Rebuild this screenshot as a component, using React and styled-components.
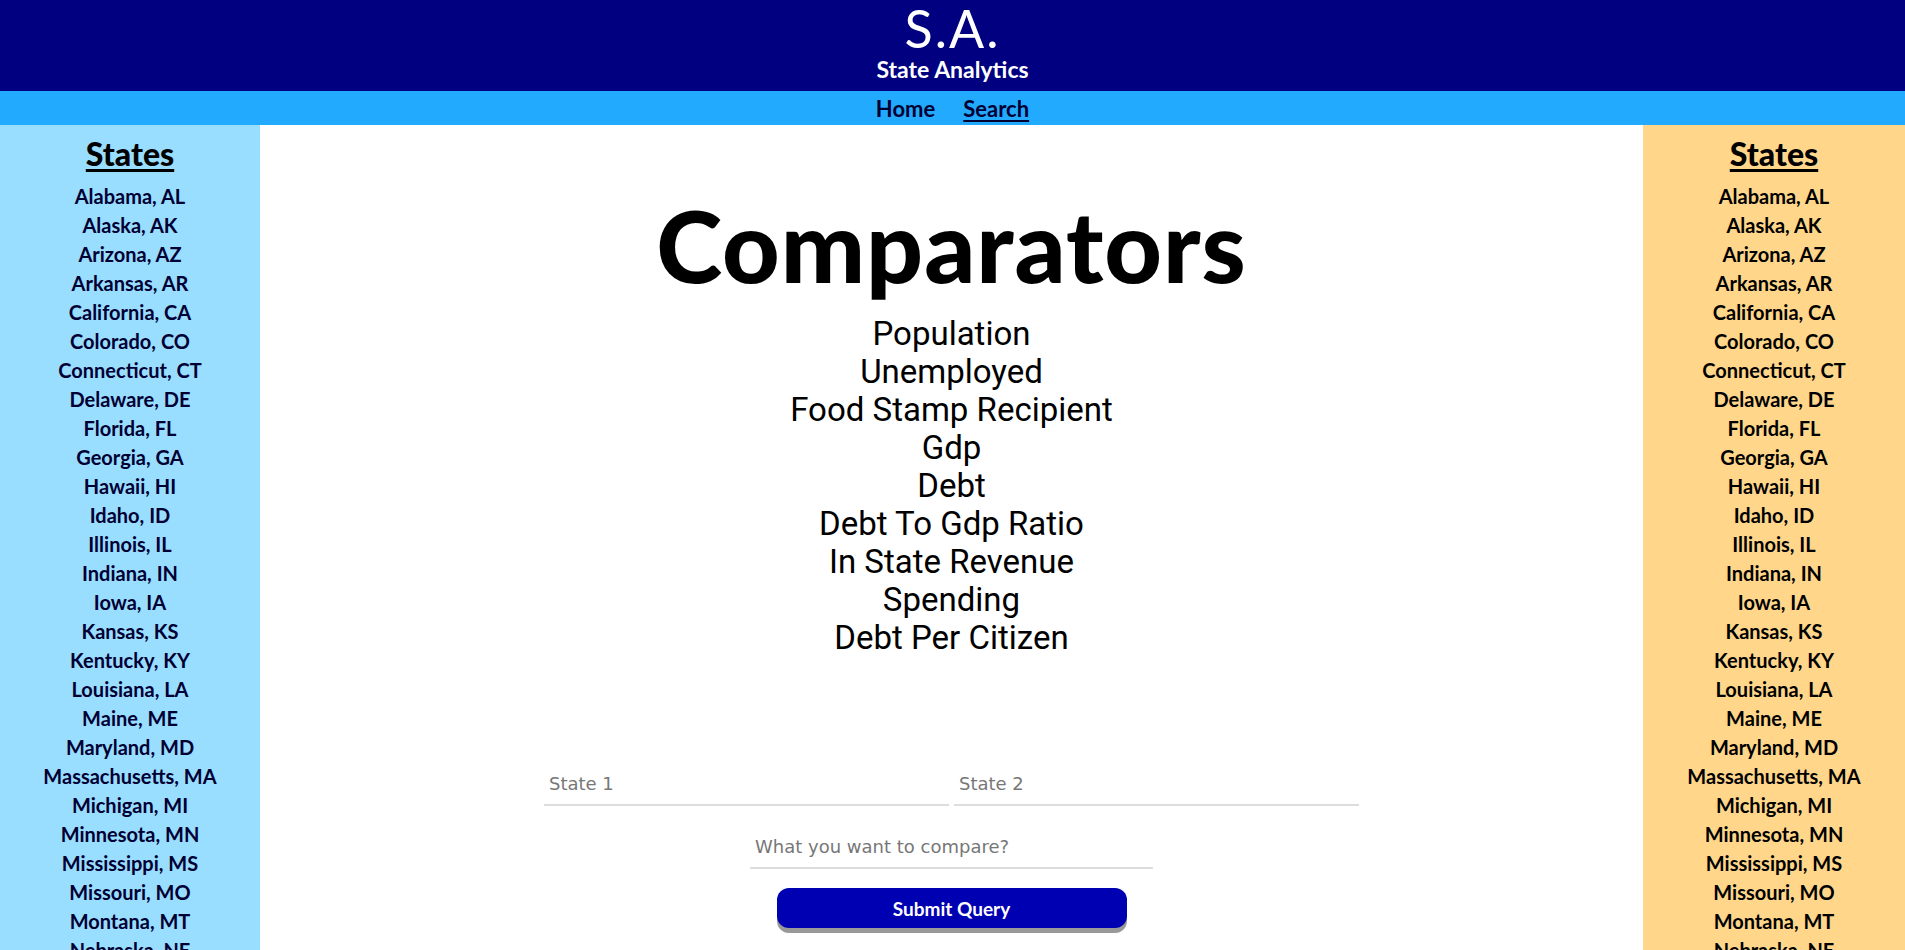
import React from "react";
import styled, { createGlobalStyle } from "styled-components";

const GlobalStyle = createGlobalStyle`
  body {
    margin: 0;
    font-family: "Lato", "Liberation Sans", sans-serif;
  }
`;

const STATES = [
  ["Alabama", "AL"], ["Alaska", "AK"], ["Arizona", "AZ"], ["Arkansas", "AR"],
  ["California", "CA"], ["Colorado", "CO"], ["Connecticut", "CT"], ["Delaware", "DE"],
  ["Florida", "FL"], ["Georgia", "GA"], ["Hawaii", "HI"], ["Idaho", "ID"],
  ["Illinois", "IL"], ["Indiana", "IN"], ["Iowa", "IA"], ["Kansas", "KS"],
  ["Kentucky", "KY"], ["Louisiana", "LA"], ["Maine", "ME"], ["Maryland", "MD"],
  ["Massachusetts", "MA"], ["Michigan", "MI"], ["Minnesota", "MN"], ["Mississippi", "MS"],
  ["Missouri", "MO"], ["Montana", "MT"], ["Nebraska", "NE"], ["Nevada", "NV"],
  ["New Hampshire", "NH"], ["New Jersey", "NJ"], ["New Mexico", "NM"], ["New York", "NY"],
  ["North Carolina", "NC"], ["North Dakota", "ND"], ["Ohio", "OH"], ["Oklahoma", "OK"],
  ["Oregon", "OR"], ["Pennsylvania", "PA"], ["Rhode Island", "RI"], ["South Carolina", "SC"],
  ["South Dakota", "SD"], ["Tennessee", "TN"], ["Texas", "TX"], ["Utah", "UT"],
  ["Vermont", "VT"], ["Virginia", "VA"], ["Washington", "WA"], ["West Virginia", "WV"],
  ["Wisconsin", "WI"], ["Wyoming", "WY"],
];

const COMPARATORS = [
  "Population",
  "Unemployed",
  "Food Stamp Recipient",
  "Gdp",
  "Debt",
  "Debt To Gdp Ratio",
  "In State Revenue",
  "Spending",
  "Debt Per Citizen",
];

const Header = styled.header`
  height: 91px;
  background: #000080;
  color: white;
  display: flex;
  flex-direction: column;
  align-items: center;
  box-sizing: border-box;
  padding-top: 1px;
`;

const Logo = styled.h1`
  margin: 0;
  font-size: 52px;
  font-weight: 400;
  line-height: 54px;
  letter-spacing: 2px;
`;

const Tagline = styled.div`
  font-size: 23px;
  font-weight: 700;
  line-height: 28px;
`;

const Nav = styled.nav`
  height: 34px;
  background: #22aaff;
  display: flex;
  justify-content: center;
  align-items: center;
  gap: 28px;
`;

const NavLink = styled.a`
  color: #000033;
  font-size: 22px;
  font-weight: 700;
  text-decoration: ${(p) => (p.$active ? "underline" : "none")};
  text-underline-offset: 3px;
  cursor: pointer;
`;

const Main = styled.div`
  display: grid;
  grid-template-columns: 260px 1fr 262px;
`;

const Sidebar = styled.aside`
  background: ${(p) => p.$bg};
  display: flex;
  flex-direction: column;
  align-items: center;
  padding-top: 9px;
`;

const SideTitle = styled.h2`
  margin: 0 0 8px;
  font-size: 32px;
  font-weight: 900;
  line-height: 40px;
  text-decoration: underline;
  text-underline-offset: 3px;
  color: #000;
`;

const StateItem = styled.div`
  font-size: 20px;
  font-weight: 700;
  line-height: 29px;
  color: ${(p) => p.$color};
`;

const Center = styled.section`
  display: flex;
  flex-direction: column;
  align-items: center;
  padding-top: 69px;
`;

const Title = styled.h1`
  margin: 0;
  font-size: 100px;
  font-weight: 900;
  line-height: 100px;
  letter-spacing: 1px;
`;

const List = styled.div`
  margin-top: 21px;
  display: flex;
  flex-direction: column;
  align-items: center;
`;

const ListItem = styled.div`
  font-family: "Roboto", "Liberation Sans", sans-serif;
  font-size: 33px;
  line-height: 38px;
  color: #000;
`;

const Form = styled.form`
  margin-top: 108px;
  display: flex;
  flex-direction: column;
  align-items: center;
`;

const Row = styled.div`
  display: flex;
  gap: 5px;
`;

const Input = styled.input`
  width: ${(p) => p.$w}px;
  box-sizing: border-box;
  border: none;
  border-bottom: 2px solid #dddddd;
  padding: 8px 5px 10px;
  font-family: "DejaVu Sans", sans-serif;
  font-size: 18px;
  outline: none;
  background: transparent;
  &::placeholder {
    color: #777;
  }
`;

const WideInput = styled(Input)`
  margin-top: 22px;
`;

const Submit = styled.button`
  margin-top: 19px;
  width: 350px;
  height: 40px;
  border: none;
  border-radius: 12px;
  background: #0000b3;
  color: white;
  font-family: "Lato", sans-serif;
  font-size: 19px;
  font-weight: 700;
  box-shadow: 0 5px 0 #999;
  cursor: pointer;
`;

const StateList = ({ bg, color }) => (
  <Sidebar $bg={bg}>
    <SideTitle>States</SideTitle>
    {STATES.map(([name, abbr]) => (
      <StateItem key={abbr} $color={color}>
        {name}, {abbr}
      </StateItem>
    ))}
  </Sidebar>
);

export default function App() {
  return (
    <>
      <GlobalStyle />
      <Header>
        <Logo>S.A.</Logo>
        <Tagline>State Analytics</Tagline>
      </Header>
      <Nav>
        <NavLink>Home</NavLink>
        <NavLink $active>Search</NavLink>
      </Nav>
      <Main>
        <StateList bg="#99ddff" color="#000033" />
        <Center>
          <Title>Comparators</Title>
          <List>
            {COMPARATORS.map((c) => (
              <ListItem key={c}>{c}</ListItem>
            ))}
          </List>
          <Form onSubmit={(e) => e.preventDefault()}>
            <Row>
              <Input $w={405} placeholder="State 1" />
              <Input $w={405} placeholder="State 2" />
            </Row>
            <WideInput $w={403} placeholder="What you want to compare?" />
            <Submit type="submit">Submit Query</Submit>
          </Form>
        </Center>
        <StateList bg="#ffd68a" color="#000" />
      </Main>
    </>
  );
}
